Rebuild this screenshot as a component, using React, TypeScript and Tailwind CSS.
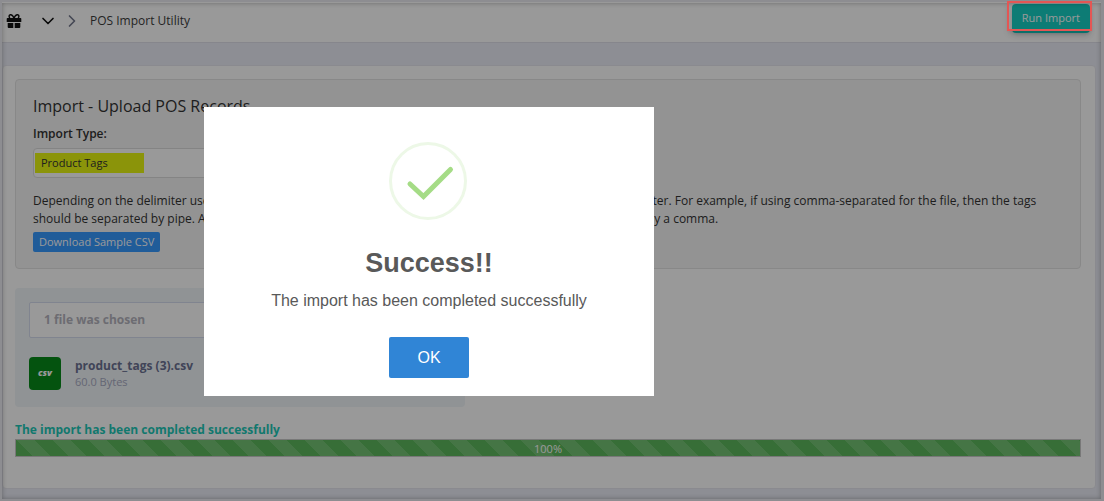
import { ChevronDown, ChevronRight } from "lucide-react";

const GiftIcon = () => (
  <svg className="size-4" viewBox="0 0 16 16" fill="currentColor">
    <path d="M1.5 5h13a.8.8 0 0 1 .8.8V9H.7V5.8a.8.8 0 0 1 .8-.8ZM1.7 10h5.6v5H2.7a1 1 0 0 1-1-1ZM8.7 10h5.6v4a1 1 0 0 1-1 1H8.7Z" />
    <path
      d="M8 5C7 2.500 5.500 1.500 4.300 1.700 2.800 2 2.700 4 4 4.900M8 5c1-2.500 2.500-3.500 3.700-3.300C13.200 2 13.300 4 12 4.900"
      fill="none"
      stroke="currentColor"
      strokeWidth="1.5"
    />
  </svg>
);

const Header = () => (
  <header className="flex h-10 items-start justify-between bg-white pt-0.5 pl-1 pr-[11px]">
    <nav className="flex h-[33px] items-center text-xs text-[#3c3c3c]">
      <a href="#" aria-label="Home" className="text-[#111111]">
        <GiftIcon />
      </a>
      <button type="button" aria-label="Open menu" className="ml-4 text-[#111111]">
        <ChevronDown className="size-5" strokeWidth={2} />
      </button>
      <ChevronRight className="ml-1 size-5 text-[#74788d]" strokeWidth={2} />
      <span className="ml-2">POS Import Utility</span>
    </nav>
    <button
      type="button"
      className="h-[29px] rounded-sm bg-[#17cfc4] px-2.5 text-[11px] font-medium text-white shadow-md"
    >
      Run Import
    </button>
  </header>
);

const ImportPanel = () => (
  <section className="rounded-sm border border-[#e3e3e3] bg-[#f5f5f5] px-[17px] py-4 text-[#333333]">
    <h1 className="text-base leading-5">Import - Upload POS Records</h1>
    <label htmlFor="import-type" className="mt-2 block text-xs leading-5 font-semibold">
      Import Type:
    </label>
    <div className="mt-1 h-[30px] w-1/2 rounded-sm border border-[#dddddd] bg-white px-px py-1">
      <select
        id="import-type"
        className="block h-5 w-[109px] appearance-none bg-[#e8f711] px-1.5 text-[11px] leading-5 outline-none"
      >
        <option>Product Tags</option>
      </select>
    </div>
    <p className="mt-3.5 text-xs leading-[18px]">
      Depending on the delimiter used within the file, the product tags should be separated by using a distinct
      delimiter. For example, if using comma-separated for the file, then the tags
      <br />
      should be separated by pipe. Also, if using pipe-separated for the file, then the tags should each be separated
      by a comma.
    </p>
    <button
      type="button"
      className="mt-1 block h-5 rounded-xs bg-[#3699ff] px-1.5 text-[11px] leading-5 font-medium text-white"
    >
      Download Sample CSV
    </button>
  </section>
);

const FilePanel = () => (
  <section className="mt-[19px] h-[119px] w-[450px] rounded-sm bg-[#f1f5f8] px-3.5 pt-3.5">
    <label className="flex h-9 items-center rounded-xs border border-[#d5dcee] bg-white px-3.5 text-xs font-bold text-[#b5b4be]">
      1 file was chosen
      <input type="file" className="sr-only" />
    </label>
    <div className="mt-[18px] flex items-center gap-3.5">
      <span className="flex h-[33px] w-8 items-center justify-center rounded-sm bg-[#078a1a] text-[9px] font-extrabold text-white italic">
        csv
      </span>
      <div className="pt-0.5 text-[11px] leading-4 text-[#a7abc3]">
        <p className="text-xs leading-4 font-bold text-[#6c7293]">product_tags (3).csv</p>
        <p>60.0 Bytes</p>
      </div>
    </div>
  </section>
);

const SuccessDialog = () => (
  <div
    role="dialog"
    aria-modal="true"
    aria-labelledby="dialog-title"
    className="flex w-[450px] flex-col items-center bg-white pt-[34px] pb-[18px] font-['Liberation_Sans',sans-serif] text-[#595959]"
  >
    <svg className="size-20" viewBox="0 0 80 80" fill="none">
      <circle cx="39" cy="40" r="37.5" stroke="#edf8e7" strokeWidth="3" />
      <path d="M21 43 34.5 55.5 61.5 28.5" stroke="#a5dc86" strokeWidth="5" strokeLinecap="round" />
    </svg>
    <h2 id="dialog-title" className="mt-6 text-[27px] leading-9 font-bold">
      Success!!
    </h2>
    <p className="mt-2 text-base leading-6">The import has been completed successfully</p>
    <button type="button" className="mt-6 h-[41px] w-20 rounded-xs bg-[#3085d6] text-base text-white">
      OK
    </button>
  </div>
);

export default function App() {
  return (
    <div className="relative min-h-screen bg-[#ececf2] p-[2px] pr-[3px] font-['Open_Sans',sans-serif]">
      <Header />
      <main className="border-t border-[#dfe0ea] bg-[#ebedf7] pt-[22px] pr-[5px] pb-2.5">
        <div className="rounded-sm border border-[#e6e6ee] bg-white pt-[13px] pr-3.5 pb-[31px] pl-3">
          <ImportPanel />
          <FilePanel />
          <p className="mt-3.5 text-xs leading-[18px] font-bold text-[#1dc9b7]">
            The import has been completed successfully
          </p>
          <div
            role="progressbar"
            aria-label="Import progress"
            aria-valuenow={100}
            className="h-[18px] border border-[#c8c8c8] bg-[#5cb85c] bg-[linear-gradient(45deg,rgba(255,255,255,0.15)_25%,transparent_25%,transparent_50%,rgba(255,255,255,0.15)_50%,rgba(255,255,255,0.15)_75%,transparent_75%)] bg-[length:36px_36px] text-center text-[11px] leading-[18px] text-white"
          >
            100%
          </div>
        </div>
      </main>
      <div className="absolute inset-0 flex items-center justify-center bg-black/40 pt-0.5">
        <div className="absolute inset-0 mt-[3px] mr-[3px] mb-[2px] ml-[2px] shadow-[inset_0_0_5px_rgba(0,0,0,0.3)]" />
        <div className="relative pr-[246px]">
          <SuccessDialog />
        </div>
      </div>
      <div className="absolute top-px right-3 h-[30px] w-[85px] border-2 border-[#e45654] shadow-md" />
    </div>
  );
}
